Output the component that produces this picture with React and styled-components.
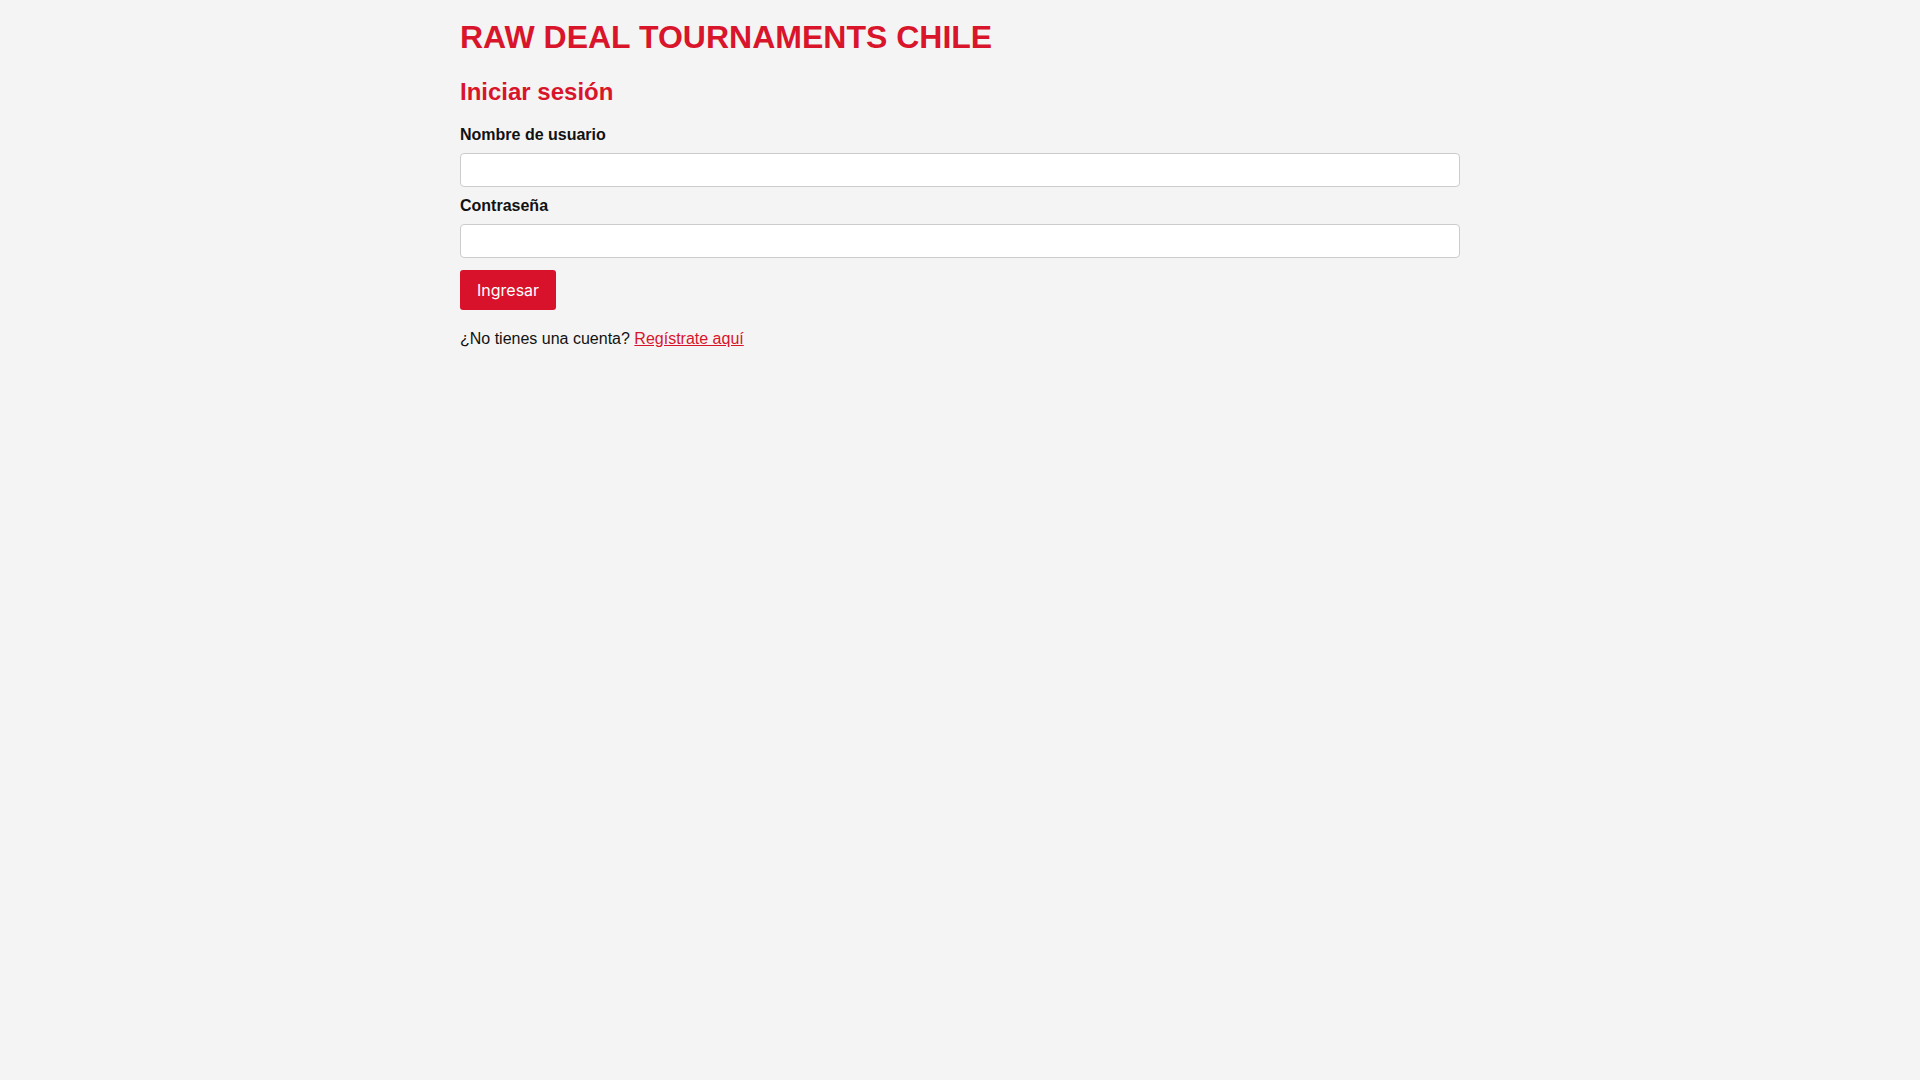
import React from "react";
import styled, { createGlobalStyle } from "styled-components";

const GlobalStyle = createGlobalStyle`
  html, body {
    margin: 0;
    background-color: #f4f4f4;
    font-family: "Liberation Sans", Arial, sans-serif;
    color: #111;
  }
`;

export default function App() {
  return (
    <>
      <GlobalStyle />
      <Container>
        <Title>RAW DEAL TOURNAMENTS CHILE</Title>
        <SubTitle>Iniciar sesión</SubTitle>
        <Form onSubmit={(e) => e.preventDefault()}>
          <Label htmlFor="username">Nombre de usuario</Label>
          <Input id="username" type="text" />
          <Label htmlFor="password">Contraseña</Label>
          <Input id="password" type="password" />
          <Button type="submit">Ingresar</Button>
        </Form>
        <Footer>
          ¿No tienes una cuenta? <a href="#registro">Regístrate aquí</a>
        </Footer>
      </Container>
    </>
  );
}

const Container = styled.div`
  max-width: 1000px;
  margin: 0 auto;
  padding-top: 1px;
`;

const Title = styled.h1`
  font-size: 32px;
  font-weight: 700;
  color: #d9152b;
  margin: 18px 0 22px;
`;

const SubTitle = styled.h2`
  font-size: 24px;
  font-weight: 700;
  color: #d9152b;
  margin: 0 0 20px;
`;

const Form = styled.form`
  display: flex;
  flex-direction: column;
  align-items: flex-start;
`;

const Label = styled.label`
  font-size: 16px;
  font-weight: 700;
  margin-bottom: 8.5px;
`;

const Input = styled.input`
  box-sizing: border-box;
  width: 100%;
  height: 34px;
  padding: 8px;
  margin: 0 0 10.5px;
  border: 1px solid #cccccc;
  border-radius: 4px;
  background-color: #fff;
  font-size: 14px;
`;

const Button = styled.button`
  margin-top: 1.5px;
  padding: 10px 17px;
  border: none;
  border-radius: 3px;
  background-color: #d9122b;
  color: #fff;
  font-family: Inter, "Noto Sans", sans-serif;
  font-size: 16px;
  cursor: pointer;
`;

const Footer = styled.p`
  margin: 20px 0 0;
  font-size: 16px;
  color: #111;
  a {
    color: #d9152b;
    text-decoration: underline;
  }
`;
